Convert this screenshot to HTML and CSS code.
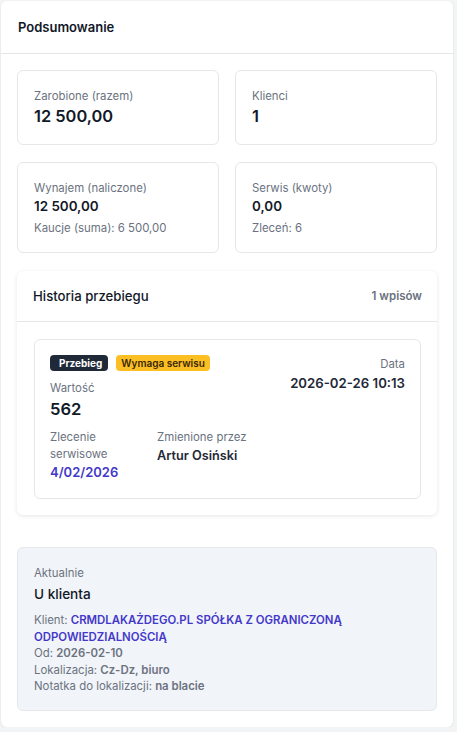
FILE: index.html
```html
<!DOCTYPE html>
<html lang="pl">
<head>
<meta charset="utf-8">
<title>Podsumowanie</title>
<link rel="stylesheet" href="styles.css">
</head>
<body>
<div class="panel">
  <div class="panel-header">Podsumowanie</div>
  <div class="panel-body">
    <div class="stats">
      <div class="stat">
        <div class="stat-label">Zarobione (razem)</div>
        <div class="stat-value big">12 500,00</div>
      </div>
      <div class="stat">
        <div class="stat-label">Klienci</div>
        <div class="stat-value big">1</div>
      </div>
      <div class="stat">
        <div class="stat-label">Wynajem (naliczone)</div>
        <div class="stat-value">12 500,00</div>
        <div class="stat-sub">Kaucje (suma): 6 500,00</div>
      </div>
      <div class="stat">
        <div class="stat-label">Serwis (kwoty)</div>
        <div class="stat-value">0,00</div>
        <div class="stat-sub">Zleceń: 6</div>
      </div>
    </div>

    <div class="history">
      <div class="history-header">
        <div class="history-title">Historia przebiegu</div>
        <div class="history-count">1 wpisów</div>
      </div>
      <div class="history-body">
        <div class="entry">
          <div class="entry-main">
            <div class="badges">
              <span class="badge badge-dark">Przebieg</span>
              <span class="badge badge-yellow">Wymaga serwisu</span>
            </div>
            <div class="field-label">Wartość</div>
            <div class="entry-value">562</div>
            <div class="entry-grid">
              <div>
                <div class="field-label small">Zlecenie serwisowe</div>
                <div class="link-value">4/02/2026</div>
              </div>
              <div>
                <div class="field-label small">Zmienione przez</div>
                <div class="person">Artur Osiński</div>
              </div>
            </div>
          </div>
          <div class="entry-side">
            <div class="field-label">Data</div>
            <div class="entry-date">2026-02-26 10:13</div>
          </div>
        </div>
      </div>
    </div>

    <div class="current">
      <div class="current-label">Aktualnie</div>
      <div class="current-title">U klienta</div>
      <div class="current-lines">
        <p class="line">Klient: <span class="client">CRMDLAKAŻDEGO.PL SPÓŁKA Z OGRANICZONĄ ODPOWIEDZIALNOŚCIĄ</span></p>
        <p class="line">Od: <b>2026-02-10</b></p>
        <p class="line">Lokalizacja: <b>Cz-Dz, biuro</b></p>
        <p class="line">Notatka do lokalizacji: <b>na blacie</b></p>
      </div>
    </div>
  </div>
</div>
</body>
</html>
```

FILE: styles.css
```css
* { box-sizing: border-box; }
html, body { margin: 0; padding: 0; }
body {
  background: #f3f4f6;
  font-family: Inter, "Noto Sans", "Liberation Sans", sans-serif;
  color: #111827;
  padding: 1px 0 0 1px;
}
.panel {
  width: 452px;
  background: #fff;
  border-radius: 6px;
  box-shadow: 0 1px 3px rgba(0,0,0,0.08);
  padding-bottom: 16px;
}
.panel-header {
  padding: 16px 17px;
  font-size: 13px;
  line-height: 20px;
  font-weight: 600;
  border-bottom: 1px solid #e5e7eb;
}
.panel-body {
  padding: 16px 16px 0 16px;
}
.stats {
  display: grid;
  grid-template-columns: 1fr 1fr;
  gap: 17px 16px;
}
.stat {
  border: 1px solid #e5e7eb;
  border-radius: 6px;
  padding: 16px 16px 16px 16px;
}
.stat-label {
  font-size: 11.4px;
  line-height: 18px;
  color: #6b7280;
}
.stat-value {
  font-size: 13.4px;
  line-height: 19px;
  font-weight: 600;
  color: #111827;
}
.stat-value.big {
  font-size: 16.4px;
  line-height: 23px;
}
.stat-sub {
  margin-top: 4px;
  font-size: 11.4px;
  line-height: 16px;
  color: #6b7280;
}
.history {
  margin-top: 18px;
  border-radius: 6px;
  box-shadow: 0 1px 4px rgba(0,0,0,0.10);
  background: #fff;
}
.history-header {
  display: flex;
  justify-content: space-between;
  align-items: center;
  padding: 16px 15px 15px 16px;
  border-bottom: 1px solid #e5e7eb;
}
.history-title {
  font-size: 13.2px;
  line-height: 19px;
  font-weight: 500;
}
.history-count {
  font-size: 11.5px;
  line-height: 19px;
  font-weight: 600;
  color: #6b7280;
}
.history-body {
  padding: 17px 16px 16px 17px;
}
.entry {
  border: 1px solid #e5e7eb;
  border-radius: 6px;
  padding: 15px 15px 17px 15px;
  display: flex;
  justify-content: space-between;
}
.badges {
  display: flex;
  gap: 8px;
  margin-bottom: 8px;
}
.badge {
  display: inline-block;
  font-size: 10px;
  line-height: 16px;
  font-weight: 700;
  border-radius: 4px;
}
.badge-dark {
  background: #1f2937;
  color: #fff;
  padding: 0 6px 0 9px;
}
.badge-yellow {
  background: #fbbf24;
  color: #3a2705;
  font-weight: 600;
  padding: 0 5px;
}
.field-label {
  font-size: 11.4px;
  line-height: 18px;
  color: #6b7280;
}
.field-label.small {
  line-height: 17px;
}
.entry-value {
  font-size: 16.6px;
  line-height: 24px;
  font-weight: 600;
}
.entry-grid {
  margin-top: 8px;
  display: grid;
  grid-template-columns: 95px auto;
  column-gap: 12px;
}
.link-value {
  font-size: 13px;
  line-height: 18px;
  font-weight: 600;
  color: #4338ca;
}
.person {
  font-size: 12.7px;
  line-height: 20px;
  font-weight: 600;
  color: #1f2937;
}
.entry-side {
  text-align: right;
}
.entry-date {
  font-size: 13.2px;
  line-height: 20px;
  font-weight: 600;
  color: #1f2937;
}
.current {
  margin-top: 32px;
  background: #f1f4f8;
  border: 1px solid #e5e7eb;
  border-radius: 6px;
  padding: 17px 16px 15px 16px;
}
.current-label {
  font-size: 11.4px;
  line-height: 16px;
  color: #6b7280;
}
.current-title {
  margin-top: 3px;
  font-size: 13.6px;
  line-height: 20px;
  font-weight: 500;
  color: #111827;
}
.current-lines {
  margin-top: 8px;
  font-size: 11.4px;
  line-height: 16.5px;
  color: #6b7280;
}
.line {
  margin: 0;
}
.current-lines b {
  font-weight: 600;
  color: #6b7280;
}
.client {
  font-weight: 600;
  color: #4338ca;
}
```
